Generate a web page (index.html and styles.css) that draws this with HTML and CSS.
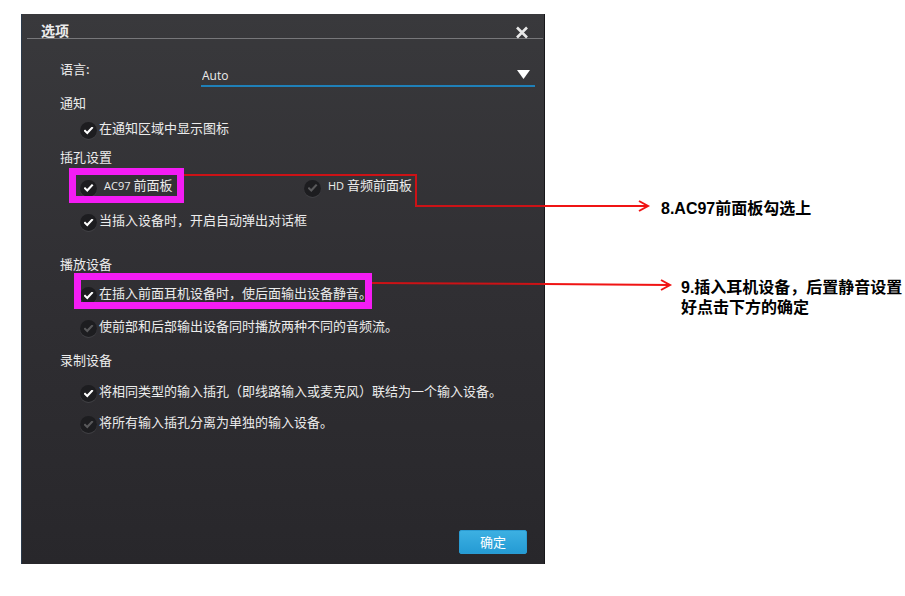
FILE: index.html
```html
<!DOCTYPE html>
<html lang="zh-CN">
<head>
<meta charset="utf-8">
<title>选项</title>
<link rel="stylesheet" href="styles.css">
</head>
<body>
<main class="guide">
  <form class="dialog">
    <header class="titlebar">
      <h1 class="title">选项</h1>
      <button class="close" type="button" aria-label="关闭">
        <svg width="14" height="14" viewBox="0 0 14 14"><path d="M2 1.5 L12 11.5 M12 1.5 L2 11.5"/></svg>
      </button>
    </header>
    <div class="content">
      <div class="language">
        <label class="language-label" for="language">语言:</label>
        <div class="picker">
          <select id="language"><option>Auto</option></select>
          <svg class="arrow" width="13" height="9" viewBox="0 0 13 9"><path d="M0 0 H13 L6.5 9 Z"/></svg>
        </div>
      </div>

      <section class="group notify">
        <h2>通知</h2>
        <label class="option"><input type="checkbox" checked>在通知区域中显示图标</label>
      </section>

      <section class="group jacks">
        <h2>插孔设置</h2>
        <div class="panels">
          <label class="option panel"><input type="checkbox" checked><span><span class="latin">AC97</span> 前面板</span></label>
          <label class="option panel"><input type="checkbox"><span><span class="latin">HD</span> 音频前面板</span></label>
        </div>
        <label class="option"><input type="checkbox" checked>当插入设备时，开启自动弹出对话框</label>
      </section>

      <section class="group playback">
        <h2>播放设备</h2>
        <label class="option"><input type="checkbox" checked>在插入前面耳机设备时，使后面输出设备静音。</label>
        <label class="option"><input type="checkbox">使前部和后部输出设备同时播放两种不同的音频流。</label>
      </section>

      <section class="group recording">
        <h2>录制设备</h2>
        <label class="option"><input type="checkbox" checked>将相同类型的输入插孔（即线路输入或麦克风）联结为一个输入设备。</label>
        <label class="option"><input type="checkbox">将所有输入插孔分离为单独的输入设备。</label>
      </section>
    </div>
    <footer class="actions">
      <button class="confirm" type="button">确定</button>
    </footer>
  </form>

  <aside class="notes">
    <p class="note">8.AC97前面板勾选上</p>
    <p class="note note-mute">9.插入耳机设备，后置静音设置<br>好点击下方的确定</p>
  </aside>

  <svg class="marks" width="905" height="596" viewBox="0 0 905 596" aria-hidden="true">
    <rect class="frame" x="72.5" y="171.5" width="108" height="28"/>
    <rect class="frame" x="77.5" y="276.5" width="291" height="29"/>
    <path class="line on-dark" d="M184 175 H416 V206 H545"/>
    <path class="line" d="M544 206 H648 M639 201 L648 206 L639 211"/>
    <path class="line on-dark" d="M372 283 L545 284"/>
    <path class="line" d="M544 284 L670 285 M661 280 L670 285 L661 290"/>
  </svg>
</main>
</body>
</html>
```
FILE: styles.css
```css
* {
  box-sizing: border-box;
}

body {
  margin: 0;
  background: #fff;
  font-family: "Noto Sans CJK SC", sans-serif;
  font-size: 13px;
  line-height: 20px;
}

h1, h2, p {
  margin: 0;
}

.guide {
  position: relative;
  display: grid;
  grid-template-columns: minmax(0, 524px) 1fr;
  align-items: start;
  padding: 14px 0 32px 21px;
}

.dialog {
  display: flex;
  flex-direction: column;
  border-right: 1px solid #17171a;
  border-left: 1px solid #2b3a4b;
  background: linear-gradient(#39393c, #302f33 50%, #28272b);
  color: #ececec;
}

.titlebar {
  display: flex;
  justify-content: space-between;
  height: 25px;
  margin: 0 1px 0 5px;
  padding: 6px 14px 0;
  border-bottom: 1px solid #77777a;
}

.title {
  font-size: 14px;
  line-height: 20px;
}

.close {
  width: 14px;
  height: 14px;
  margin-top: 6px;
  padding: 0;
  border: 0;
  background: none;
}

.close svg {
  display: block;
  overflow: visible;
  fill: none;
  stroke: #e8e8e8;
  stroke-width: 2.6;
}

.content {
  padding: 17px 9px 0 38px;
}

.language {
  display: grid;
  grid-template-columns: 141px 1fr;
}

.language-label {
  padding-top: 3px;
}

.picker {
  display: flex;
  align-items: center;
  height: 31px;
  padding-top: 10px;
  border-bottom: 2px solid #1f80b8;
}

.picker select {
  flex: 1;
  height: 20px;
  margin-right: -18px;
  padding: 0 18px 0 1px;
  appearance: none;
  border: 0;
  background: none;
  color: inherit;
  font: 12px/20px "Open Sans", sans-serif;
}

.arrow {
  margin: 0 5px 3px 0;
  fill: #fff;
  pointer-events: none;
}

.group {
  display: flex;
  flex-direction: column;
}

h2 {
  font-size: 13px;
  font-weight: 400;
}

.option {
  display: flex;
  align-items: center;
  margin-left: 20px;
  white-space: nowrap;
}

.option input {
  display: grid;
  place-items: center;
  flex: none;
  width: 17px;
  height: 17px;
  margin: 4px 2px -1px 0;
  appearance: none;
  border-radius: 50%;
  background: #1d1d20;
  box-shadow: 0 1px 0 #414145;
}

.option input::before {
  content: "";
  width: 10px;
  height: 8px;
  background: #59595b;
  clip-path: polygon(0 52%, 16% 36%, 36% 62%, 84% 0, 100% 16%, 38% 100%);
}

.option input:checked::before {
  background: #fff;
}

.notify {
  gap: 5px;
  margin-top: 6px;
}

.jacks {
  gap: 8px;
  margin-top: 9px;
}

.panels {
  display: grid;
  grid-template-columns: 224px 1fr;
  padding-bottom: 6px;
}

.panel input {
  margin-right: 7px;
}

.latin {
  font-family: "Open Sans", sans-serif;
  font-size: 11px;
}

.playback {
  gap: 13px;
  margin-top: 24px;
}

.playback h2 {
  margin-bottom: -4px;
}

.recording {
  gap: 11px;
  margin-top: 14px;
}

.actions {
  display: flex;
  justify-content: flex-end;
  padding: 98px 17px 10px;
}

.confirm {
  width: 68px;
  height: 24px;
  padding: 0;
  border: 1px solid #2a9bd2;
  border-radius: 2px;
  background: linear-gradient(#3cb0e2, #259bd4);
  color: #fff;
  font: inherit;
}

.notes {
  padding: 185px 0 0 116px;
}

.note {
  color: #000;
  font: bold 16px/20px "Liberation Sans", "Noto Sans CJK SC", sans-serif;
  white-space: nowrap;
}

.note-mute {
  margin: 59px 0 0 20px;
}

.marks {
  position: absolute;
  top: 0;
  left: 0;
  pointer-events: none;
}

.frame {
  fill: none;
  stroke: #f41cf4;
  stroke-width: 7;
}

.line {
  fill: none;
  stroke: #f01414;
  stroke-width: 2;
}

.on-dark {
  stroke: #cc1216;
}
```
